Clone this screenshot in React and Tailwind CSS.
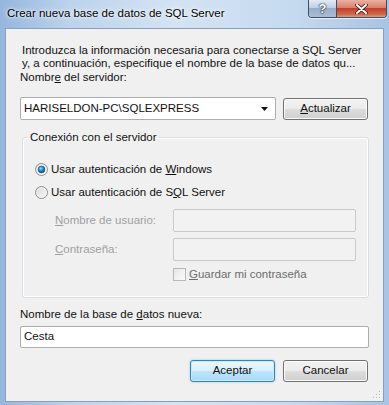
import React from "react";

const F = { fontFamily: '"Liberation Sans", Arial, sans-serif' };

function Radio({ checked }) {
  return (
    <svg width="13" height="13" viewBox="0 0 13 13" className="shrink-0">
      <defs>
        <linearGradient id={checked ? "rg1" : "rg0"} x1="0" y1="0" x2="1" y2="1">
          <stop offset="0" stopColor="#d6d6d6" />
          <stop offset="1" stopColor="#fbfbfb" />
        </linearGradient>
        <radialGradient id="dot" cx="0.4" cy="0.35" r="0.7">
          <stop offset="0" stopColor="#9be0fb" />
          <stop offset="0.45" stopColor="#2f8fc4" />
          <stop offset="1" stopColor="#0f3e66" />
        </radialGradient>
      </defs>
      <circle cx="6.5" cy="6.5" r="6" fill={`url(#${checked ? "rg1" : "rg0"})`} stroke="#8c8f93" strokeWidth="1" />
      <circle cx="6.5" cy="6.5" r="4.6" fill="none" stroke="#f4f4f4" strokeWidth="0.8" />
      {checked && <circle cx="6.5" cy="6.5" r="3.4" fill="url(#dot)" stroke="#1c4e75" strokeWidth="0.6" />}
    </svg>
  );
}

function Btn({ children, def, className = "" }) {
  return (
    <div
      className={
        "h-[22px] w-[85px] rounded-[3px] border flex items-center justify-center text-[11.5px] text-[#111] " +
        (def
          ? "border-[#3c7fb1] bg-[linear-gradient(#eaf6fd_0%,#d9f0fc_50%,#bee6fd_50%,#a7d9f5_100%)] shadow-[inset_0_0_0_1px_#c6ecfc,0_0_2px_#7ec4ea] "
          : "border-[#707070] bg-[linear-gradient(#f2f2f2_0%,#ebebeb_50%,#dddddd_50%,#cfcfcf_100%)] shadow-[inset_0_0_0_1px_#fcfcfc] ") +
        className
      }
    >
      {children}
    </div>
  );
}

export default function App() {
  return (
    <div
      style={F}
      className="w-[389px] h-[405px] overflow-hidden flex flex-col bg-[linear-gradient(90deg,#95b6de_0%,#bcd3ec_18%,#d3e3f3_45%,#c6daef_75%,#a8c3e4_100%)]"
    >
      {/* title bar */}
      <div className="h-[28px] shrink-0 flex items-start justify-between">
        <div className="pl-[7px] pt-[6px] text-[11.5px] leading-[14px] text-black [text-shadow:0_0_6px_#ffffff,0_0_3px_#ffffff]">
          Crear nueva base de datos de SQL Server
        </div>
        <div className="flex mr-[2px] h-[18px] rounded-b-[4px] border border-t-0 border-[#3d4e66] overflow-hidden shadow-[0_1px_0_#e8eff8]">
          <div className="w-[28px] h-full flex items-center justify-center border-r border-[#3d4e66] bg-[linear-gradient(#e2eaf4_0%,#bfcfe2_45%,#98adc9_50%,#a9bdd7_100%)]">
            <span className="text-white text-[13px] font-bold leading-none [text-shadow:0_0_1px_#23354d,0_0_1px_#23354d,0_0_2px_#23354d]">?</span>
          </div>
          <div className="w-[49px] h-full flex items-center justify-center bg-[linear-gradient(#eab1a3_0%,#d9806b_45%,#c2402a_50%,#cf6a4c_85%,#e0a07c_100%)]">
            <svg width="13" height="10" viewBox="0 0 13 10">
              <path d="M2 1 L11 9 M11 1 L2 9" stroke="#3b1a14" strokeWidth="3.6" strokeLinecap="round" />
              <path d="M2 1 L11 9 M11 1 L2 9" stroke="#ffffff" strokeWidth="2" strokeLinecap="round" />
            </svg>
          </div>
        </div>
      </div>

      {/* client area */}
      <div className="relative flex-1 mx-[5px] mb-[3px] border border-[#8b9fb8] bg-[#f0f0f0] px-[14px] text-[11.5px] text-[#111]">
        <div className="pt-[15px] pl-[2px] leading-[13px]">
          <div>Introduzca la información necesaria para conectarse a SQL Server</div>
          <div>y, a continuación, especifique el nombre de la base de datos qu...</div>
        </div>

        <div className="mt-[1px] leading-[13px]">
          Nombr<span className="underline">e</span> del servidor:
        </div>

        <div className="mt-[13px] flex items-start gap-[7px]">
          <div className="h-[23px] w-[256px] bg-white border border-[#abadb3] rounded-[2px] flex items-center pl-[3px] pr-[7px] justify-between">
            <span>HARISELDON-PC\SQLEXPRESS</span>
            <svg width="7" height="4" viewBox="0 0 7 4">
              <path d="M0 0 H7 L3.5 4 Z" fill="#111" />
            </svg>
          </div>
          <Btn className="mt-[1px]">
            <span><span className="underline">A</span>ctualizar</span>
          </Btn>
        </div>

        <fieldset className="mt-[11px] ml-[2px] w-[347px] h-[167px] border border-[#d5dfe5] rounded-[3px] shadow-[inset_0_0_0_1px_#ffffff]">
          <legend className="ml-[5px] px-[2px] leading-[13px]">Conexión con el servidor</legend>
          <div className="pl-[12px] pt-[19px] flex flex-col">
            <div className="flex items-center gap-[3px] h-[13px]">
              <Radio checked />
              <span>Usar autenticación de <span className="underline">W</span>indows</span>
            </div>
            <div className="flex items-center gap-[3px] h-[13px] mt-[10px]">
              <Radio />
              <span>Usar autenticación de S<span className="underline">Q</span>L Server</span>
            </div>
            <div className="mt-[10px] pl-[20px] flex items-center h-[23px] text-[#a0a0a0]">
              <span className="w-[118px]"><span className="underline">N</span>ombre de usuario:</span>
              <div className="h-[23px] w-[183px] border border-[#c9c9c9] rounded-[2px] bg-[#f2f2f2]" />
            </div>
            <div className="mt-[6px] pl-[20px] flex items-center h-[23px] text-[#a0a0a0]">
              <span className="w-[118px]"><span className="underline">C</span>ontraseña:</span>
              <div className="h-[23px] w-[183px] border border-[#c9c9c9] rounded-[2px] bg-[#f2f2f2]" />
            </div>
            <div className="mt-[7px] pl-[138px] flex items-center gap-[3px] h-[13px] text-[#6d6d6d]">
              <div className="w-[13px] h-[13px] border border-[#b8b8b8] bg-[linear-gradient(135deg,#e6e6e6,#fbfbfb)]" />
              <span><span className="underline">G</span>uardar mi contraseña</span>
            </div>
          </div>
        </fieldset>

        <div className="mt-[10px] leading-[13px]">
          Nombre de la base de <span className="underline">d</span>atos nueva:
        </div>
        <div className="mt-[5px] h-[22px] w-[349px] bg-white border border-[#abadb3] rounded-[2px] flex items-center pl-[3px]">
          Cesta
        </div>

        <div className="mt-[12px] flex justify-end gap-[8px] pr-[1px]">
          <Btn def>Aceptar</Btn>
          <Btn>Cancelar</Btn>
        </div>

        <svg className="absolute right-[1px] bottom-[1px]" width="10" height="10" viewBox="0 0 10 10">
          {[[8, 2], [8, 5], [8, 8], [5, 5], [5, 8], [2, 8]].map(([x, y], i) => (
            <g key={i}>
              <rect x={x} y={y} width="1" height="1" fill="#ffffff" />
              <rect x={x - 1} y={y - 1} width="1" height="1" fill="#b8b8b8" />
            </g>
          ))}
        </svg>
      </div>
    </div>
  );
}
